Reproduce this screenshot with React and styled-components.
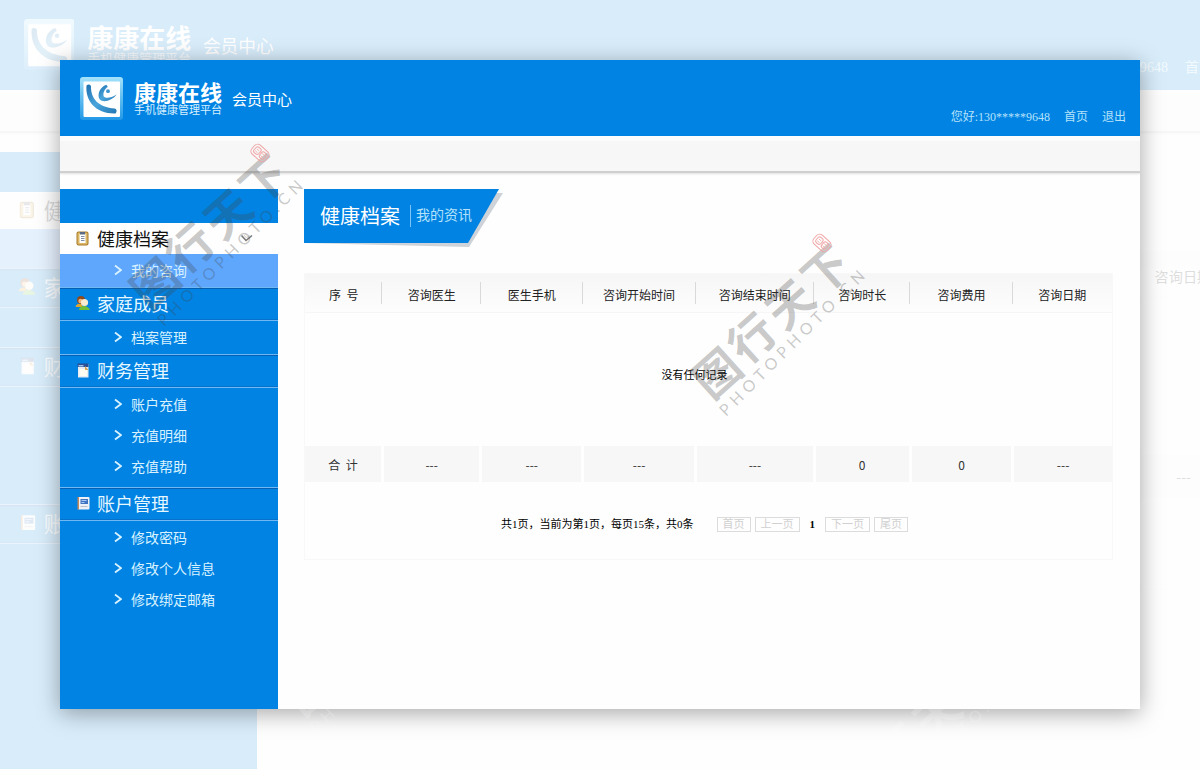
import React from 'react';
import styled, { createGlobalStyle, css } from 'styled-components';

const sans = css`
  font-family: 'Noto Sans CJK SC', 'Open Sans', sans-serif;
`;

const song = css`
  font-family: 'Liberation Serif', 'Noto Sans CJK SC', serif;
`;

const menus = [
  { title: '健康档案', icon: 'clipboard', active: true, items: ['我的咨询'] },
  { title: '家庭成员', icon: 'people', items: ['档案管理'] },
  { title: '财务管理', icon: 'sheet', items: ['账户充值', '充值明细', '充值帮助'], roomy: true },
  { title: '账户管理', icon: 'book', items: ['修改密码', '修改个人信息', '修改绑定邮箱'] }
];

const columns = [
  { name: '序\u00a0\u00a0号', width: '9.6%', total: '合\u00a0\u00a0计' },
  { name: '咨询医生', width: '12.2%', total: '---' },
  { name: '医生手机', width: '12.6%', total: '---' },
  { name: '咨询开始时间', width: '14%', total: '---' },
  { name: '咨询结束时间', width: '14.7%', total: '---' },
  { name: '咨询时长', width: '11.9%', total: '0' },
  { name: '咨询费用', width: '12.7%', total: '0' },
  { name: '咨询日期', width: '12.3%', total: '---' }
];

const App = () => {
  return (
    <>
      <GlobalStyle />
      <Stage lang="zh-CN">
        <Backdrop aria-hidden="true" inert>
          <BackdropScreen>
            <Screen />
          </BackdropScreen>
        </Backdrop>
        <Card>
          <Watermark left="216px" top="487px" color="rgba(255, 255, 255, 0.2)" />
          <Watermark left="772px" top="580px" color="rgba(255, 255, 255, 0.2)" />
          <CardBody>
            <Screen />
            <Watermark left="63px" top="80px" color="rgba(70, 70, 70, 0.29)" seal />
            <Watermark left="625px" top="170px" color="rgba(70, 70, 70, 0.29)" seal />
          </CardBody>
        </Card>
      </Stage>
    </>
  );
};

const Screen = () => (
  <ScreenWrap>
    <Header>
      <LogoIcon />
      <Brand>
        <BrandName>康康在线</BrandName>
        <BrandNote>手机健康管理平台</BrandNote>
      </Brand>
      <Center>会员中心</Center>
      <UserNav>
        <span>您好:130*****9648</span>
        <UserLink href="#home">首页</UserLink>
        <UserLink href="#logout">退出</UserLink>
      </UserNav>
    </Header>
    <SubBar />
    <Content>
      <Sidebar>
        {menus.map(menu => (
          <MenuGroup key={menu.title} menu={menu} />
        ))}
      </Sidebar>
      <Main>
        <TitleTab>
          <TitleFace>
            <Title>健康档案</Title>
            <SubTitle>我的资讯</SubTitle>
          </TitleFace>
        </TitleTab>
        <Panel>
          <RecordTable />
          <Pager />
        </Panel>
      </Main>
    </Content>
  </ScreenWrap>
);

const MenuGroup = ({ menu }) => (
  <div>
    <MenuTitle $active={menu.active}>
      <MenuIcon type={menu.icon} />
      <span>{menu.title}</span>
      {menu.active && (
        <DownIcon viewBox="0 0 14 10">
          <path d="M1.5 2.5 6 7.5 12 2.5" fill="none" stroke="#777" strokeWidth="1.6" />
          <path d="M4 2 6.5 5 9.5 2" fill="none" stroke="#ccc" />
        </DownIcon>
      )}
    </MenuTitle>
    <MenuList $roomy={menu.roomy} $active={menu.active}>
      {menu.items.map(item => (
        <li key={item}>
          <MenuLink href="#menu">
            <ArrowIcon viewBox="0 0 8 12">
              <path d="M1 1.5 7 6 1 10.5" fill="none" stroke="currentColor" strokeWidth="1.8" />
            </ArrowIcon>
            {item}
          </MenuLink>
        </li>
      ))}
    </MenuList>
  </div>
);

const RecordTable = () => (
  <Table>
    <colgroup>
      {columns.map(col => (
        <col key={col.name} style={{ width: col.width }} />
      ))}
    </colgroup>
    <thead>
      <tr>
        {columns.map(col => (
          <HeadCell key={col.name} scope="col">
            {col.name}
          </HeadCell>
        ))}
      </tr>
    </thead>
    <tbody>
      <tr>
        <EmptyCell colSpan={columns.length}>没有任何记录</EmptyCell>
      </tr>
    </tbody>
    <tfoot>
      <tr>
        {columns.map(col => (
          <TotalCell key={col.name}>{col.total}</TotalCell>
        ))}
      </tr>
    </tfoot>
  </Table>
);

const Pager = () => (
  <PagerWrap>
    <PagerInfo>共1页，当前为第1页，每页15条，共0条</PagerInfo>
    <PageButton type="button">首页</PageButton>
    <PageButton type="button">上一页</PageButton>
    <CurrentPage aria-current="page">1</CurrentPage>
    <PageButton type="button">下一页</PageButton>
    <PageButton type="button">尾页</PageButton>
  </PagerWrap>
);

const LogoIcon = () => (
  <Logo viewBox="0 0 43 43" aria-hidden="true">
    <defs>
      <linearGradient id="frame" x1="0" y1="0" x2="0" y2="1">
        <stop offset="0" stopColor="#a5e3fb" />
        <stop offset="0.5" stopColor="#5fbdf0" />
        <stop offset="1" stopColor="#2298e6" />
      </linearGradient>
      <linearGradient id="swoosh" x1="0" y1="0" x2="1" y2="1">
        <stop offset="0" stopColor="#1d6fae" />
        <stop offset="0.5" stopColor="#4aa5dc" />
        <stop offset="1" stopColor="#2277b4" />
      </linearGradient>
    </defs>
    <rect width="43" height="43" rx="3" fill="url(#frame)" />
    <rect x="3.5" y="4.5" width="36.5" height="35.5" rx="1" fill="#fff" />
    <path
      d="M6.5 8.500Q9 6.500 11 9C10.500 21 18 30.500 35 31.500Q38 33.500 35.500 36.500C16 37 5 24 6.500 8.500Z"
      fill="url(#swoosh)"
    />
    <path
      d="M26.500 7.700C19.500 10 16.800 18 19.800 22.500C23.500 26.500 33 23 36.500 17.500C31.500 20.800 26 22 23.800 19.500C22.500 16.500 24.500 12 27.800 10Z"
      fill="url(#swoosh)"
    />
    <circle cx="28" cy="14.200" r="1.900" fill="#3d93cf" />
  </Logo>
);

const MenuIcon = ({ type }) => {
  let drawing = null;

  switch (type) {
    case 'clipboard':
      drawing = (
        <>
          <rect x="1" y="1.5" width="12" height="14" rx="2" fill="#a87a2a" />
          <rect x="2" y="2.5" width="10" height="12" rx="1" fill="#dcb866" />
          <rect x="4" y="4" width="6" height="9" fill="#fff" />
          <path d="M4.5 2h5v2.500h-5z" fill="#5b6a84" />
          <path d="M5.5 6.500h3.500M5.500 8.500h3.500M5.500 10.500h3.500" stroke="#7f8da5" />
        </>
      );
      break;
    case 'people':
      drawing = (
        <>
          <circle cx="5.5" cy="5" r="4" fill="#8d4a1e" />
          <circle cx="5" cy="6" r="2.200" fill="#f0b27a" />
          <path d="M0 12q1-4 6-3l1 3z" fill="#e0a52c" />
          <circle cx="9" cy="7.500" r="3.600" fill="#f7ecd2" />
          <path d="M3 15q2-4.500 6-4t5.500 4z" fill="#6dbf3a" />
        </>
      );
      break;
    case 'sheet':
      drawing = (
        <>
          <path d="M2.500 2h10.500v13.500h-10.500z" fill="#e9edf2" />
          <path d="M2 1.500h11v3.500h-11z" fill="#2b4f94" />
          <path d="M3 3h5v1.500h-5z" fill="#9cc4ec" />
          <path d="M4 7h7.500v7h-7.500z" fill="#fffdf2" />
          <path d="M9.500 4 13 8h-3.500z" fill="#d9a55a" />
        </>
      );
      break;
    default:
      drawing = (
        <>
          <rect x="2.500" y="2" width="11.500" height="12.500" rx="1" fill="#eef2f7" />
          <path d="M2 2h1.500v12.500h-1.500z" fill="#c4885c" />
          <rect x="5" y="4" width="7.500" height="5" fill="#3f74c0" />
          <path d="M6 5.500h5M6 7.500h3" stroke="#a9cbf3" />
          <path d="M5 11.500h7" stroke="#b7c0cc" />
        </>
      );
      break;
  }

  return (
    <SmallIcon viewBox="0 0 15 16" aria-hidden="true">
      {drawing}
    </SmallIcon>
  );
};

const Watermark = ({ left, top, color, seal }) => (
  <Mark viewBox="0 0 190 190" aria-hidden="true" $left={left} $top={top} $color={color}>
    <MarkBrush transform="translate(30 141) rotate(-42)">图</MarkBrush>
    <MarkBrush transform="translate(65 106) rotate(-42)">行</MarkBrush>
    <MarkBrush transform="translate(103 72) rotate(-42)">天</MarkBrush>
    <MarkBrush transform="translate(139 38) rotate(-42)">下</MarkBrush>
    <MarkLatin transform="translate(41 187) rotate(-45)">PHOTOPHOTO.CN</MarkLatin>
    {seal && (
      <g transform="translate(137 13) rotate(42)" fill="none" stroke="#f0a3a3">
        <rect x="-9" y="-6" width="18" height="12" rx="4" />
        <rect x="-6.5" y="-3.5" width="6" height="7" rx="2" />
        <rect x="1" y="-3.5" width="5.5" height="7" rx="2" />
        <path d="M-5-1h3M-5 1.500h3M2-1h3M2 1.500h3" strokeWidth="0.8" />
      </g>
    )}
  </Mark>
);

const GlobalStyle = createGlobalStyle`
  * {
    box-sizing: border-box;
  }

  body {
    margin: 0;
    background: #fff;
    ${sans}
  }
`;

const Stage = styled.div`
  position: relative;
  display: flex;
  min-height: 100vh;
  padding: 60px;
  overflow: hidden;
`;

// 背景里放大、变淡的同一页面
const Backdrop = styled.div`
  position: absolute;
  inset: 0;
  overflow: hidden;
  opacity: 0.15;
`;

const BackdropScreen = styled.div`
  display: flex;
  width: 106.2%;
  min-height: 100%;
  zoom: 1.18;
`;

const Card = styled.div`
  position: relative;
  display: flex;
  flex: 1;
  min-width: 0;
  box-shadow: 0 4px 22px rgba(0, 0, 0, 0.35);
`;

const CardBody = styled.div`
  position: relative;
  display: flex;
  flex: 1;
  min-width: 0;
  overflow: hidden;
`;

const ScreenWrap = styled.div`
  display: flex;
  flex: 1;
  flex-direction: column;
  min-width: 0;
  background: #fefefe;
`;

const Header = styled.header`
  display: flex;
  align-items: center;
  height: 76px;
  padding: 0 14px 0 20px;
  background: #0083e3;
  color: #fff;
`;

const Logo = styled.svg`
  width: 43px;
  height: 43px;
`;

const Brand = styled.div`
  margin-left: 11px;
`;

const BrandName = styled.div`
  font-size: 22px;
  font-weight: 700;
  line-height: 22px;
`;

const BrandNote = styled.div`
  color: #d8f0ff;
  font-size: 11px;
  line-height: 14px;
`;

const Center = styled.div`
  margin-left: 10px;
  padding-top: 2px;
  font-size: 15px;
  line-height: 20px;
`;

const UserNav = styled.nav`
  display: flex;
  align-self: flex-end;
  gap: 14px;
  margin-left: auto;
  padding-bottom: 10px;
  ${song}
  color: #b5e2fa;
  font-size: 12px;
  line-height: 18px;
`;

const UserLink = styled.a`
  color: inherit;
  text-decoration: none;
`;

const SubBar = styled.div`
  height: 37px;
  border-top: 5px solid #fcfcfc;
  border-bottom: 2px solid #cfcfcf;
  background: #f7f7f7;
  box-shadow: 0 1px 2px rgba(0, 0, 0, 0.12);
`;

const Content = styled.div`
  display: flex;
  flex: 1;
  padding-top: 16px;
`;

const Sidebar = styled.aside`
  flex: none;
  width: 218px;
  padding-top: 34px;
  background: #0083e3;
`;

const MenuTitle = styled.div`
  display: flex;
  align-items: center;
  gap: 6px;
  height: ${props => (props.$active ? '31px' : '34px')};
  padding: 0 24px 2px 15px;
  border-top: 1px solid ${props => (props.$active ? '#fff' : '#6fb8f2')};
  border-bottom: 1px solid ${props => (props.$active ? '#fff' : '#6fb8f2')};
  background: ${props => (props.$active ? '#fefefe' : '#0083e3')};
  box-shadow: ${props => (props.$active ? 'none' : 'inset 0 1px 0 #0560b4, inset 0 -1px 0 #0672cb')};
  color: ${props => (props.$active ? '#111' : '#e6f7ff')};
  font-size: 18px;
  line-height: 28px;
`;

const SmallIcon = styled.svg`
  width: 16px;
  height: 16px;
`;

const DownIcon = styled.svg`
  width: 14px;
  height: 10px;
  margin-left: auto;
`;

const MenuList = styled.ul`
  margin: 0;
  padding: 1px 0 ${props => (props.$roomy ? '5px' : '1px')};
  background: ${props => (props.$active ? '#5fa6fd' : 'none')};
  list-style: none;
`;

const MenuLink = styled.a`
  display: flex;
  align-items: center;
  gap: 9px;
  height: 31px;
  padding: 0 0 2px 54px;
  color: #d9f2ff;
  font-size: 14px;
  line-height: 20px;
  text-decoration: none;
`;

const ArrowIcon = styled.svg`
  width: 8px;
  height: 12px;
`;

const Main = styled.main`
  flex: 1;
  min-width: 0;
  padding: 0 27px 0 26px;
`;

const slant = css`
  clip-path: polygon(0 0, 100% 0, calc(100% - 31px) 100%, 0 100%);
`;

const TitleTab = styled.div`
  position: relative;
  width: 195px;

  &::before {
    content: '';
    position: absolute;
    inset: 4px -4px -4px 0;
    background: #cdd3d8;
    clip-path: polygon(0 0, 100% 0, calc(100% - 34px) 100%, 0 calc(100% - 4px));
  }
`;

const TitleFace = styled.div`
  position: relative;
  display: flex;
  align-items: center;
  height: 54px;
  padding-left: 16px;
  background: #0083e3;
  ${slant}
`;

const Title = styled.h1`
  margin: 0;
  color: #fff;
  font-size: 20px;
  font-weight: 400;
  line-height: 28px;
`;

const SubTitle = styled.span`
  margin-left: 10px;
  padding-left: 5px;
  border-left: 1px solid #7cc4f5;
  ${song}
  color: #b5e2fa;
  font-size: 14px;
  line-height: 22px;
`;

const Panel = styled.section`
  margin-top: 30px;
  border: 1px solid #f8f8f8;
`;

const Table = styled.table`
  width: 100%;
  table-layout: fixed;
  border-collapse: collapse;
`;

const HeadCell = styled.th`
  height: 38px;
  padding: 3px 0 0;
  border-bottom: 1px solid #f6f6f6;
  background:
    linear-gradient(#d9d9d9, #d9d9d9) right center / 1px 22px no-repeat,
    linear-gradient(#f6f6f6, #fdfdfd);
  color: #222;
  font-size: 12px;
  font-weight: 400;

  &:last-child {
    background: linear-gradient(#f6f6f6, #fdfdfd);
  }
`;

const EmptyCell = styled.td`
  height: 134px;
  padding: 0 28px 11px 0;
  color: #000;
  font-size: 11px;
  text-align: center;
`;

const TotalCell = styled.td`
  height: 36px;
  padding: 0;
  border-right: 3px solid #fefefe;
  background: #f7f7f7;
  color: #333;
  font-size: 12px;
  text-align: center;

  &:last-child {
    border-right: 0;
  }
`;

const PagerWrap = styled.div`
  display: flex;
  align-items: center;
  justify-content: center;
  gap: 4px;
  height: 77px;
  padding: 7px 8px 0 0;
  ${song}
  color: #000;
  font-size: 11px;
  line-height: 13px;
`;

const PagerInfo = styled.span`
  margin-right: 19px;
`;

const PageButton = styled.button`
  height: 15px;
  padding: 0 5px;
  border: 1px solid #dcdcdc;
  background: none;
  color: #d0d0d0;
  font: inherit;
  cursor: pointer;
`;

const CurrentPage = styled.span`
  margin: 0 6px;
  font-weight: 700;
`;

const Mark = styled.svg`
  position: absolute;
  left: ${props => props.$left};
  top: ${props => props.$top};
  width: 190px;
  height: 190px;
  fill: ${props => props.$color};
  pointer-events: none;
`;

const MarkBrush = styled.text`
  font-size: 46px;
  font-weight: 700;
  text-anchor: middle;
  dominant-baseline: central;
`;

const MarkLatin = styled.text`
  font-family: Lato, sans-serif;
  font-size: 16px;
  letter-spacing: 5px;
`;

export default App;
